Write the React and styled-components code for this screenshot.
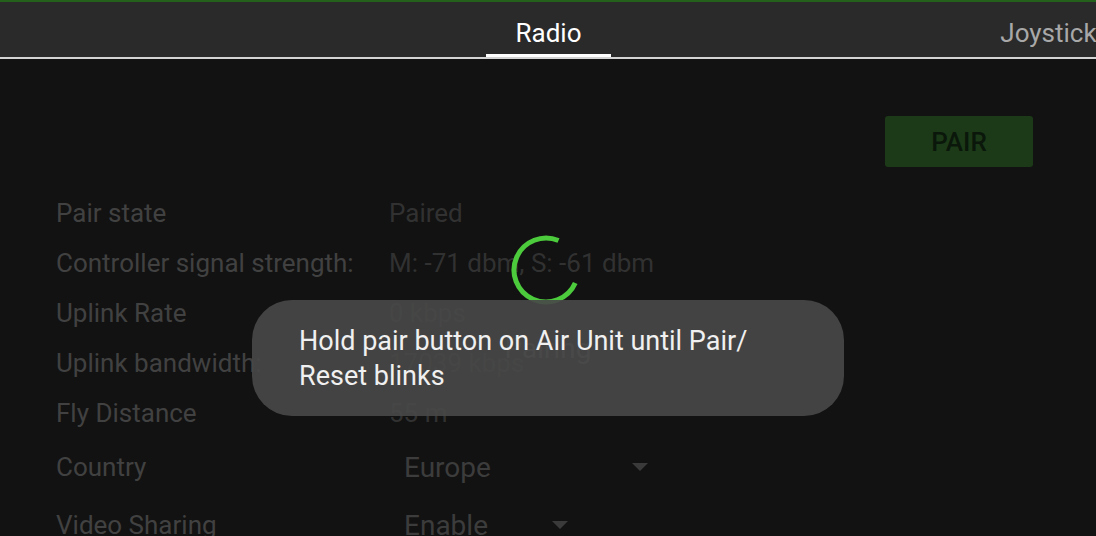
import React from 'react';
import styled, { createGlobalStyle } from 'styled-components';

const GlobalStyle = createGlobalStyle`
  html, body {
    margin: 0;
    padding: 0;
    background: #121212;
  }
  body {
    font-family: Roboto, "Noto Sans", sans-serif;
  }
`;

const Screen = styled.div`
  position: relative;
  width: 1096px;
  height: 536px;
  overflow: hidden;
  background: #121212;
  display: flex;
  flex-direction: column;
`;

const TabBar = styled.div`
  height: 59px;
  flex-shrink: 0;
  background: #2a2a2a;
  border-top: 2px solid #24621c;
  border-bottom: 2px solid #d4d4d4;
  box-sizing: border-box;
  display: flex;
  align-items: stretch;
  padding-left: 486px;
  gap: 375px;
`;

const Tab = styled.div`
  position: relative;
  width: 125px;
  flex-shrink: 0;
  display: flex;
  align-items: center;
  justify-content: center;
  padding-top: 7px;
  font-size: 26px;
  color: ${(p) => (p.active ? '#ffffff' : '#a8a8a8')};
  white-space: nowrap;

  &::after {
    content: '';
    display: ${(p) => (p.active ? 'block' : 'none')};
    position: absolute;
    left: 0;
    right: 0;
    bottom: 0;
    height: 3px;
    background: #ffffff;
  }
`;

const Content = styled.div`
  flex: 1;
  padding: 57px 63px 0 56px;
  display: flex;
  flex-direction: column;
`;

const ActionRow = styled.div`
  display: flex;
  justify-content: flex-end;
  margin-bottom: 21px;
`;

const PairButton = styled.div`
  width: 148px;
  height: 51px;
  border-radius: 3px;
  background: #1c3a18;
  color: #0a170a;
  font-size: 26px;
  font-weight: 500;
  display: flex;
  align-items: center;
  justify-content: center;
`;

const Grid = styled.div`
  display: grid;
  grid-template-columns: 333px 1fr;
`;

const Label = styled.div`
  height: ${(p) => (p.tall ? 58 : 50)}px;
  display: flex;
  align-items: center;
  font-size: 26px;
  color: #414141;
  white-space: nowrap;
`;

const Value = styled.div`
  height: ${(p) => (p.tall ? 58 : 50)}px;
  display: flex;
  align-items: center;
  font-size: 26px;
  color: #313131;
  white-space: nowrap;
`;

const Select = styled.div`
  width: ${(p) => p.width}px;
  margin-left: 15px;
  display: flex;
  align-items: center;
  justify-content: space-between;
  font-size: 28px;
  color: #3c3c3c;
`;

const Caret = styled.span`
  width: 0;
  height: 0;
  border-left: 8px solid transparent;
  border-right: 8px solid transparent;
  border-top: 8px solid #3a3a3a;
`;

const DialogLayer = styled.div`
  position: absolute;
  left: 0;
  right: 0;
  top: 233px;
  display: flex;
  flex-direction: column;
  align-items: center;
`;

const Spinner = styled.svg`
  width: 74px;
  height: 74px;
  margin-left: -4px;
`;

const DialogText = styled.div`
  margin-top: 25px;
  font-size: 28px;
  color: #5a5a5a;
`;

const Toast = styled.div`
  position: absolute;
  left: 252px;
  top: 300px;
  width: 592px;
  height: 116px;
  box-sizing: border-box;
  border-radius: 40px;
  background: rgba(72, 72, 72, 0.92);
  padding: 24px 80px 0 47px;
  font-size: 27px;
  line-height: 35px;
  color: #f0f0f0;
`;

const rows = [
  { label: 'Pair state', value: 'Paired' },
  { label: 'Controller signal strength:', value: 'M: -71 dbm, S: -61 dbm' },
  { label: 'Uplink Rate', value: '0 kbps' },
  { label: 'Uplink bandwidth:', value: '17039 kbps' },
  { label: 'Fly Distance', value: '55 m' },
];

const selects = [
  { label: 'Country', value: 'Europe', width: 244 },
  { label: 'Video Sharing', value: 'Enable', width: 164 },
];

export default function App() {
  return (
    <Screen>
      <GlobalStyle />
      <TabBar>
        <Tab active>Radio</Tab>
        <Tab>Joystick</Tab>
      </TabBar>
      <Content>
        <ActionRow>
          <PairButton>PAIR</PairButton>
        </ActionRow>
        <Grid>
          {rows.map((r) => (
            <React.Fragment key={r.label}>
              <Label>{r.label}</Label>
              <Value>{r.value}</Value>
            </React.Fragment>
          ))}
          {selects.map((s) => (
            <React.Fragment key={s.label}>
              <Label tall>{s.label}</Label>
              <Value tall>
                <Select width={s.width}>
                  {s.value}
                  <Caret />
                </Select>
              </Value>
            </React.Fragment>
          ))}
        </Grid>
      </Content>
      <DialogLayer>
        <Spinner viewBox="0 0 74 74">
          <circle
            cx="37"
            cy="37"
            r="32"
            fill="none"
            stroke="#4ccb3c"
            strokeWidth="5"
            strokeDasharray="150 201"
            transform="rotate(24 37 37)"
          />
        </Spinner>
        <DialogText>Pairing</DialogText>
      </DialogLayer>
      <Toast>Hold pair button on Air Unit until Pair/ Reset blinks</Toast>
    </Screen>
  );
}
